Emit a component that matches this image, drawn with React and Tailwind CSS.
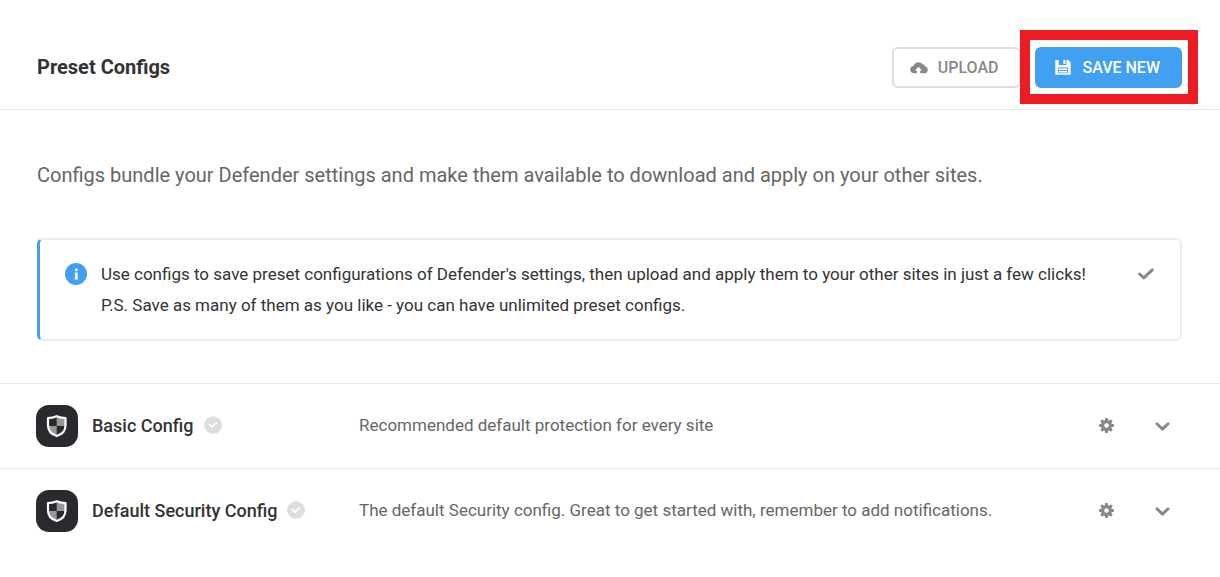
import React from "react";

const configs = [
  { name: "Basic Config", description: "Recommended default protection for every site" },
  {
    name: "Default Security Config",
    description: "The default Security config. Great to get started with, remember to add notifications.",
  },
];

function CloudUploadIcon() {
  return (
    <svg viewBox="0 0 18 12" className="h-3 w-[18px] shrink-0" fill="currentColor" aria-hidden="true">
      <path
        fillRule="evenodd"
        d="M8.2 0.2C6 0.2 4.3 1.7 3.7 3.7C1.6 4 0.2 5.7 0.2 7.7C0.2 9.9 1.8 11.3 3.9 11.3H6.9V8.6H4.9L8.5 4.7L12.1 8.6H10.3V11.3H14C16.2 11.3 17.8 9.9 17.8 7.9C17.8 6.1 16.6 4.7 14.9 4.3C14.8 3.1 13.9 2.3 12.7 2.3C11.7 0.9 10.1 0.2 8.2 0.2Z"
      />
    </svg>
  );
}

function SaveIcon() {
  return (
    <svg viewBox="0 0 16 16" className="size-4 shrink-0" fill="currentColor" aria-hidden="true">
      <path
        fillRule="evenodd"
        d="M0.3 0H3.7V5H11.6V0H13.3L15.7 2.4V14.7H0.3ZM2.9 7.6V13.2H13.1V7.6Z"
      />
      <path d="M8.3 0H10.6V3.8H8.3ZM3.6 8.4H12.4V10H3.6ZM3.6 10.9H12.4V12.5H3.6Z" />
    </svg>
  );
}

function InfoIcon() {
  return (
    <svg viewBox="0 0 22 22" className="size-[22px] shrink-0" aria-hidden="true">
      <circle cx="11" cy="11" r="11" fill="#41a0f1" />
      <circle cx="11.3" cy="6.8" r="1.5" fill="white" />
      <path d="M9.7 9.4H12.6V15.4H13V16.5H9.7V15.4H10.1V10.5H9.7Z" fill="white" />
    </svg>
  );
}

function CheckIcon() {
  return (
    <svg viewBox="0 0 16 12" className="h-3 w-4 shrink-0" aria-hidden="true">
      <path d="M1.6 6L5.8 9.9L14.3 1.9" fill="none" stroke="currentColor" strokeWidth="2.9" strokeLinecap="round" strokeLinejoin="round" />
    </svg>
  );
}

function AppliedIcon() {
  return (
    <svg viewBox="0 0 18 18" className="mb-[3px] size-[18px] shrink-0" aria-hidden="true">
      <circle cx="9" cy="9" r="8.8" fill="#dddddd" />
      <path d="M5.7 8.8L8 11L12.3 6.9" fill="none" stroke="white" strokeWidth="2" strokeLinecap="round" strokeLinejoin="round" />
    </svg>
  );
}

function DefenderIcon() {
  return (
    <svg viewBox="0 0 42 42" className="size-[42px] shrink-0" aria-hidden="true">
      <rect width="42" height="42" rx="13" fill="#292a2e" />
      <path d="M20.7 11.8L29 14V21H20.7Z" fill="#979799" />
      <path d="M12.5 21H20.7V30.5C15.5 28.8 12.8 25.5 12.5 21Z" fill="#979799" />
      <path d="M20.7 11.2C17.8 12.4 14.8 13 12 13V20.3C12 25.6 15.3 29.4 20.7 31C26.2 29.4 29.5 25.6 29.5 20.3V13C26.7 13 23.7 12.4 20.7 11.2Z" fill="none" stroke="white" strokeWidth="2.2" strokeLinejoin="round" />
    </svg>
  );
}

function GearIcon() {
  return (
    <svg viewBox="0 0 16 16" className="size-4" aria-hidden="true">
      <g fill="currentColor">
        <rect x="6" y="0" width="3" height="15" rx="0.8" />
        <rect x="6" y="0" width="3" height="15" rx="0.8" transform="rotate(45 7.5 7.5)" />
        <rect x="6" y="0" width="3" height="15" rx="0.8" transform="rotate(90 7.5 7.5)" />
        <rect x="6" y="0" width="3" height="15" rx="0.8" transform="rotate(135 7.5 7.5)" />
        <circle cx="7.5" cy="7.5" r="5.5" />
      </g>
      <circle cx="7.5" cy="7.5" r="2.3" fill="white" />
    </svg>
  );
}

function ChevronIcon() {
  return (
    <svg viewBox="0 0 16 10" className="h-[10px] w-4" aria-hidden="true">
      <path d="M1.9 2.7L7.5 8.1L13.1 2.7" fill="none" stroke="currentColor" strokeWidth="2.9" strokeLinecap="round" strokeLinejoin="round" />
    </svg>
  );
}

export default function App() {
  return (
    <main className="bg-white pb-6 font-['Roboto',sans-serif] text-[#333333]">
      <header className="flex items-start justify-between border-b border-[#e6e6e6] pr-[38px] pb-[21px] pl-[37px] pt-[47px]">
        <h1 className="text-xl leading-10 font-bold">Preset Configs</h1>
        <div className="flex gap-[14px]">
          <button type="button" className="flex h-[41px] items-center gap-[10px] rounded-md border-2 border-[#dddddd] pr-5 pl-4 text-base font-medium text-[#888888]">
            <CloudUploadIcon />
            UPLOAD
          </button>
          <div className="relative">
            <button type="button" className="flex h-[41px] items-center gap-3 rounded-md bg-[#41a0f1] pr-[22px] pl-5 text-base font-medium text-white">
              <SaveIcon />
              SAVE NEW
            </button>
            <div className="pointer-events-none absolute -top-[17px] -right-4 -bottom-4 -left-[15px] border-[10px] border-[#ed1c24]" />
          </div>
        </div>
      </header>

      <section className="pr-[38px] pl-[37px] pt-[49px] pb-[42px]">
        <p className="text-xl leading-8 text-[#666666]">
          Configs bundle your Defender settings and make them available to download and apply on your other sites.
        </p>
        <div className="mt-[47px] flex items-start rounded-md border-2 border-l-[3px] border-[#ebebeb] border-l-[#41a0f1] pt-[19px] pr-[26px] pb-[18px] pl-[25px]">
          <div className="flex h-[30px] items-center">
            <InfoIcon />
          </div>
          <p className="ml-[14px] flex-1 text-[17px] leading-[31px]">
            Use configs to save preset configurations of Defender's settings, then upload and apply them to your other sites in just a few clicks!
            <br />
            P.S. Save as many of them as you like - you can have unlimited preset configs.
          </p>
          <button type="button" aria-label="Dismiss" className="ml-5 flex h-[30px] items-center text-[#888888]">
            <CheckIcon />
          </button>
        </div>
      </section>

      <ul>
        {configs.map((config) => (
          <li key={config.name} className="flex h-[85px] items-center border-t border-[#e6e6e6] pr-[49px] pl-9">
            <div className="flex w-[323px] shrink-0 items-center">
              <DefenderIcon />
              <h2 className="mr-[10px] ml-[14px] text-lg font-medium">{config.name}</h2>
              <AppliedIcon />
            </div>
            <p className="flex-1 text-[17px] text-[#666666]">{config.description}</p>
            <div className="flex items-center gap-10 text-[#888888]">
              <button type="button" aria-label={"Settings for " + config.name}>
                <GearIcon />
              </button>
              <button type="button" aria-label={"Expand " + config.name}>
                <ChevronIcon />
              </button>
            </div>
          </li>
        ))}
      </ul>
    </main>
  );
}
